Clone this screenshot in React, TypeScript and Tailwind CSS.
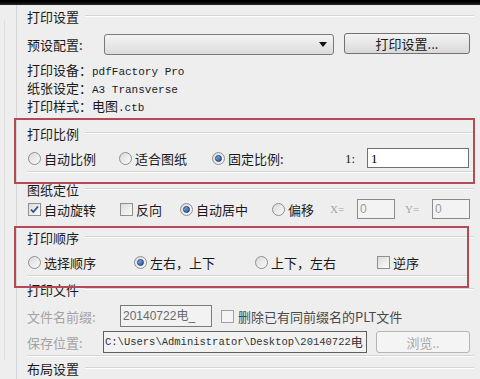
import React from "react";

const CJK = { fontFamily: '"Noto Sans CJK SC", "Microsoft YaHei", sans-serif' };
const MONO = { fontFamily: '"Liberation Mono", "Courier New", monospace' };

function Radio({ checked = false }: { checked?: boolean }) {
  return (
    <span className="relative inline-flex h-[13px] w-[13px] shrink-0 items-center justify-center rounded-full border border-[#8e8f8f] bg-gradient-to-br from-[#d9d9d9] to-[#fbfbfb]">
      {checked && (
        <span className="h-[7px] w-[7px] rounded-full border border-[#1d3f7a] bg-gradient-to-br from-[#8fb4ea] to-[#1f4f9c]" />
      )}
    </span>
  );
}

function Check({ checked = false }: { checked?: boolean }) {
  return (
    <span className="relative inline-flex h-[13px] w-[13px] shrink-0 items-center justify-center border border-[#8e8f8f] bg-gradient-to-br from-[#dcdcdc] to-[#fafafa]">
      {checked && (
        <svg width="11" height="11" viewBox="0 0 11 11">
          <path d="M2 5.5 L4.3 8 L9 2.5" fill="none" stroke="#2a4f8f" strokeWidth="1.8" />
        </svg>
      )}
    </span>
  );
}

function Header({ text, line = true }: { text: string; line?: boolean }) {
  return (
    <div className="flex h-[20px] items-center">
      <span className="text-[13px] leading-none text-[#1a1a1a]" style={CJK}>{text}</span>
      {line && <div className="ml-[6px] mr-[6px] h-[2px] flex-1 border-t border-b border-t-[#d5d5d5] border-b-white" />}
    </div>
  );
}

function Opt({ w, children, checked, box }: { w: string; children: React.ReactNode; checked?: boolean; box?: boolean }) {
  return (
    <div className={`flex items-center ${w}`}>
      {box ? <Check checked={checked} /> : <Radio checked={checked} />}
      <span className="ml-[3px] whitespace-nowrap text-[13px] leading-none text-[#1a1a1a]" style={CJK}>{children}</span>
    </div>
  );
}

export default function App() {
  return (
    <div className="relative h-[379px] w-[480px] overflow-hidden bg-[#efeeef]" style={CJK}>
      <div className="h-[5px] bg-gradient-to-b from-[#000] to-[#2a2a2a]" />
      {/* left pane edge */}
      <div className="absolute left-0 top-[5px] h-[374px] w-[17px] border-r border-r-[#d6d6d6] bg-[#eeeeee]" />
      <div className="absolute left-[4px] top-[20px] h-[340px] w-[1px] bg-[#dedede]" />

      <div className="relative pl-[27px]">
        {/* 打印设置 */}
        <div className="mt-[1px]"><Header text="打印设置" /></div>
        <div className="flex h-[36px] items-center">
          <span className="w-[77px] text-[13px] leading-none text-[#1a1a1a]">预设配置:</span>
          <div className="flex h-[21px] w-[230px] items-center justify-end rounded-[3px] border border-[#7a7a7a] bg-gradient-to-b from-[#f4f4f4] to-[#dcdcdc] pr-[6px]">
            <svg width="8" height="5" viewBox="0 0 8 5"><path d="M0 0 L8 0 L4 5 Z" fill="#111" /></svg>
          </div>
          <div className="ml-[10px] flex h-[21px] w-[126px] -translate-y-[1px] items-center justify-center rounded-[3px] border border-[#707070] bg-gradient-to-b from-[#f3f3f3] to-[#d9d9d9] text-[13px] leading-none text-[#1a1a1a]">
            打印设置...
          </div>
        </div>
        <div className="flex h-[18px] items-baseline pt-[1px] text-[13px] leading-[13px] text-[#1a1a1a]">
          <span>打印设备：</span><span className="text-[11px]" style={MONO}>pdfFactory Pro</span>
        </div>
        <div className="flex h-[18px] items-baseline pt-[1px] text-[13px] leading-[13px] text-[#1a1a1a]">
          <span>纸张设定：</span><span className="text-[11px]" style={MONO}>A3 Transverse</span>
        </div>
        <div className="flex h-[18px] items-baseline pt-[1px] text-[13px] leading-[13px] text-[#1a1a1a]">
          <span>打印样式：电图</span><span className="text-[11px]" style={MONO}>.ctb</span>
        </div>

        {/* 打印比例 */}
        <div className="mt-[7px]"><Header text="打印比例" /></div>
        <div className="mt-[3px] flex h-[24px] items-center pl-[1px]">
          <Opt w="w-[91px]">自动比例</Opt>
          <Opt w="w-[93px]">适合图纸</Opt>
          <Opt w="w-[133px]" checked>固定比例:</Opt>
          <span className="w-[22px] text-[13px] leading-none text-[#1a1a1a]" style={{ fontFamily: '"Liberation Serif", serif' }}>1:</span>
          <div className="flex h-[20px] w-[102px] items-center border border-[#707070] bg-white pl-[3px] text-[13px] leading-none text-black" style={{ fontFamily: '"Liberation Serif", serif' }}>1</div>
        </div>
        <div className="mr-[6px] mt-[1px] h-[2px] border-t border-b border-t-[#d5d5d5] border-b-white" />

        {/* 图纸定位 */}
        <div className="mt-[6px]"><Header text="图纸定位" /></div>
        <div className="flex h-[20px] items-center pl-[1px]">
          <Opt w="w-[92px]" box checked>自动旋转</Opt>
          <Opt w="w-[60px]" box>反向</Opt>
          <Opt w="w-[92px]" checked>自动居中</Opt>
          <Opt w="w-[58px]">偏移</Opt>
          <span className="w-[27px] text-[11px] leading-none text-[#a5a5a5]" style={{ fontFamily: '"Liberation Serif", serif' }}>X=</span>
          <div className="flex h-[20px] w-[38px] items-center border border-[#8a8a8a] bg-[#f3f3f3] pl-[2px] text-[12px] leading-none text-[#9a9a9a]" style={{ fontFamily: '"Liberation Sans", sans-serif' }}>0</div>
          <span className="ml-[10px] w-[27px] text-[11px] leading-none text-[#a5a5a5]" style={{ fontFamily: '"Liberation Serif", serif' }}>Y=</span>
          <div className="flex h-[20px] w-[38px] items-center border border-[#8a8a8a] bg-[#f3f3f3] pl-[2px] text-[12px] leading-none text-[#9a9a9a]" style={{ fontFamily: '"Liberation Sans", sans-serif' }}>0</div>
        </div>

        {/* 打印顺序 */}
        <div className="mt-[8px]"><Header text="打印顺序" /></div>
        <div className="mt-[3px] flex h-[24px] items-center pl-[1px]">
          <Opt w="w-[106px]">选择顺序</Opt>
          <Opt w="w-[121px]" checked>左右，上下</Opt>
          <Opt w="w-[122px]">上下，左右</Opt>
          <Opt w="w-[60px]" box>逆序</Opt>
        </div>
        <div className="mr-[12px] mt-[1px] h-[2px] border-t border-b border-t-[#d5d5d5] border-b-white" />

        {/* 打印文件 */}
        <div className="mt-[2px]"><Header text="打印文件" /></div>
        <div className="mt-[5px] flex h-[24px] items-center">
          <span className="w-[93px] text-[13px] leading-none text-[#a3a3a3]">文件名前缀:</span>
          <div className="flex h-[22px] w-[92px] items-center border border-[#7a7a7a] bg-[#f2f2f2] pl-[2px] text-[12px] leading-none text-[#6a6a6a]" style={{ fontFamily: '"Liberation Sans", "Noto Sans CJK SC", sans-serif' }}>20140722电_</div>
          <div className="ml-[9px] flex items-center">
            <span className="h-[13px] w-[13px] border border-[#a0a0a0] bg-[#f4f4f4]" />
            <span className="ml-[4px] whitespace-nowrap text-[13px] leading-none text-[#4a4a4a]">删除已有同前缀名的PLT文件</span>
          </div>
        </div>
        <div className="mt-[2px] flex h-[24px] items-center">
          <span className="w-[76px] text-[13px] leading-none text-[#a3a3a3]">保存位置:</span>
          <div className="flex h-[22px] w-[264px] items-center overflow-hidden whitespace-nowrap border border-[#5e5e5e] bg-[#f2f2f2] pl-[1px] text-[10.5px] leading-none text-[#333]" style={MONO}>
            C:\Users\Administrator\Desktop\20140722<span style={CJK} className="text-[12px]">电</span>
          </div>
          <div className="ml-[9px] flex h-[22px] w-[94px] items-center justify-center rounded-[3px] border border-[#b5b5b5] bg-[#f4f4f4] text-[13px] leading-none text-[#a8a8a8]">
            浏览..
          </div>
        </div>
        <div className="mr-[6px] mt-[1px] h-[2px] border-t border-b border-t-[#d5d5d5] border-b-white" />

        {/* 布局设置 */}
        <div className="mt-[1px]"><Header text="布局设置" /></div>
      </div>

      {/* red annotation boxes */}
      <div className="pointer-events-none absolute left-[14px] top-[118px] h-[66px] w-[461px] border-2 border-[#b34b57]" />
      <div className="pointer-events-none absolute left-[14px] top-[226px] h-[62px] w-[455px] border-2 border-[#b34b57]" />
    </div>
  );
}
